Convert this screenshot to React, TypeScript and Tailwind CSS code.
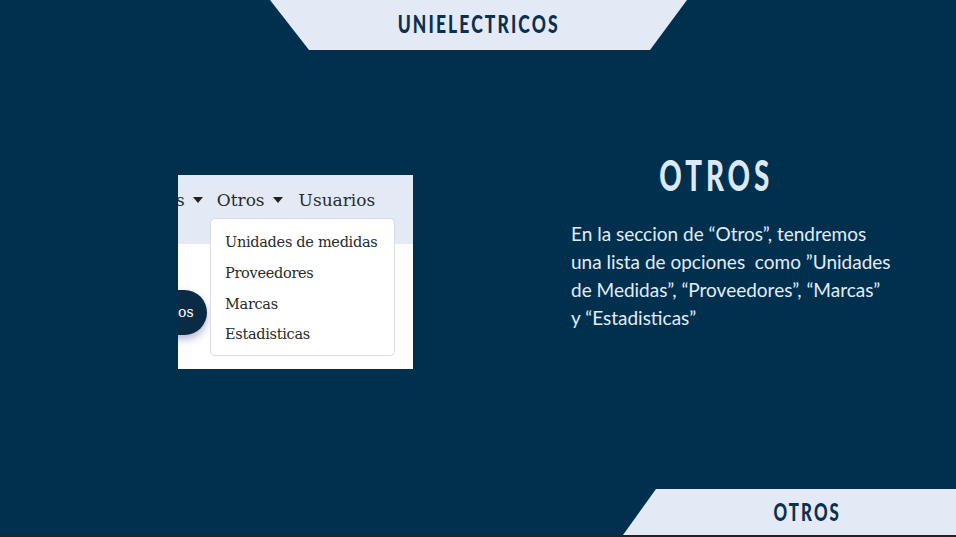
import { useState } from "react";

const navy = "bg-[#00304d]";
const head = { fontFamily: 'Lato, "DejaVu Sans", sans-serif' };

function Caret() {
  return <span className="inline-block ml-[8px] align-middle border-x-[5px] border-x-transparent border-t-[6px] border-t-[#222] translate-y-[-2px]" />;
}

function Screenshot() {
  const [items] = useState(["Unidades de medidas", "Proveedores", "Marcas", "Estadisticas"]);

  return (
    <div className="relative w-[235px] h-[194px] bg-white overflow-hidden" style={{ fontFamily: '"DejaVu Serif", "Liberation Serif", serif' }}>
      <div className="h-[69px] bg-[#e3eaf5] flex items-start pt-[13px] text-[17px] text-[#2a2a2a] whitespace-nowrap">
        <span className="ml-[-2px]">s<Caret /></span>
        <span className="ml-[14px]">Otros<Caret /></span>
        <span className="ml-[16px]">Usuarios</span>
      </div>
      <div className="absolute left-[-30px] top-[115px] w-[59px] h-[45px] rounded-full bg-[#0b2b45] shadow-[0_4px_8px_rgba(40,40,120,0.35)] flex items-center pl-[30px] text-white text-[14px]">
        os
      </div>
      <div className="absolute left-[32px] top-[43px] w-[185px] h-[138px] bg-white border border-[#d9dde3] rounded-[5px] pt-[13px] flex flex-col">
        {items.map((it) => (
          <div key={it} className="pl-[14px] h-[31px] text-[14.5px] text-[#2a2a2a] tracking-[-0.3px]">{it}</div>
        ))}
      </div>
    </div>
  );
}

export default function App() {
  return (
    <div className={`w-[956px] h-[537px] ${navy} flex flex-col overflow-hidden`}>
      <div
        className="ml-[270px] w-[417px] h-[50px] bg-[#e3eaf5] flex items-center justify-center pb-[3px]"
        style={{ clipPath: "polygon(0 0, 100% 0, calc(100% - 37px) 100%, 39px 100%)" }}
      >
        <span className="inline-block text-[25px] font-black tracking-[3px] text-[#0b2f4f] scale-x-[0.7]" style={head}>
          UNIELECTRICOS
        </span>
      </div>

      <div className="flex flex-1">
        <div className="ml-[178px] mt-[125px]">
          <Screenshot />
        </div>
        <div className="ml-[158px] mt-[104px] w-[320px]">
          <h1 className="w-[290px] text-center leading-none">
            <span className="inline-block text-[42px] font-black tracking-[6px] text-[#dde8f5] scale-x-[0.66]" style={head}>
              OTROS
            </span>
          </h1>
          <p className="mt-[24px] text-[19px] leading-[28px] text-[#e3ecf7]" style={{ fontFamily: 'Lato, "Open Sans", sans-serif' }}>
            En la seccion de “Otros”, tendremos una lista de opciones&nbsp; como ”Unidades de Medidas”, “Proveedores”, “Marcas” y “Estadisticas”
          </p>
        </div>
      </div>

      <div className="flex justify-end">
        <div
          className="w-[333px] h-[46px] bg-[#e3eaf5] flex items-center justify-center pl-[36px]"
          style={{ clipPath: "polygon(33px 0, 100% 0, 100% 100%, 0 100%)" }}
        >
          <span className="inline-block text-[24px] font-black tracking-[3px] text-[#0b2f4f] scale-x-[0.7]" style={head}>
            OTROS
          </span>
        </div>
      </div>
      <div className="h-[2px] bg-[#232323]" />
    </div>
  );
}
